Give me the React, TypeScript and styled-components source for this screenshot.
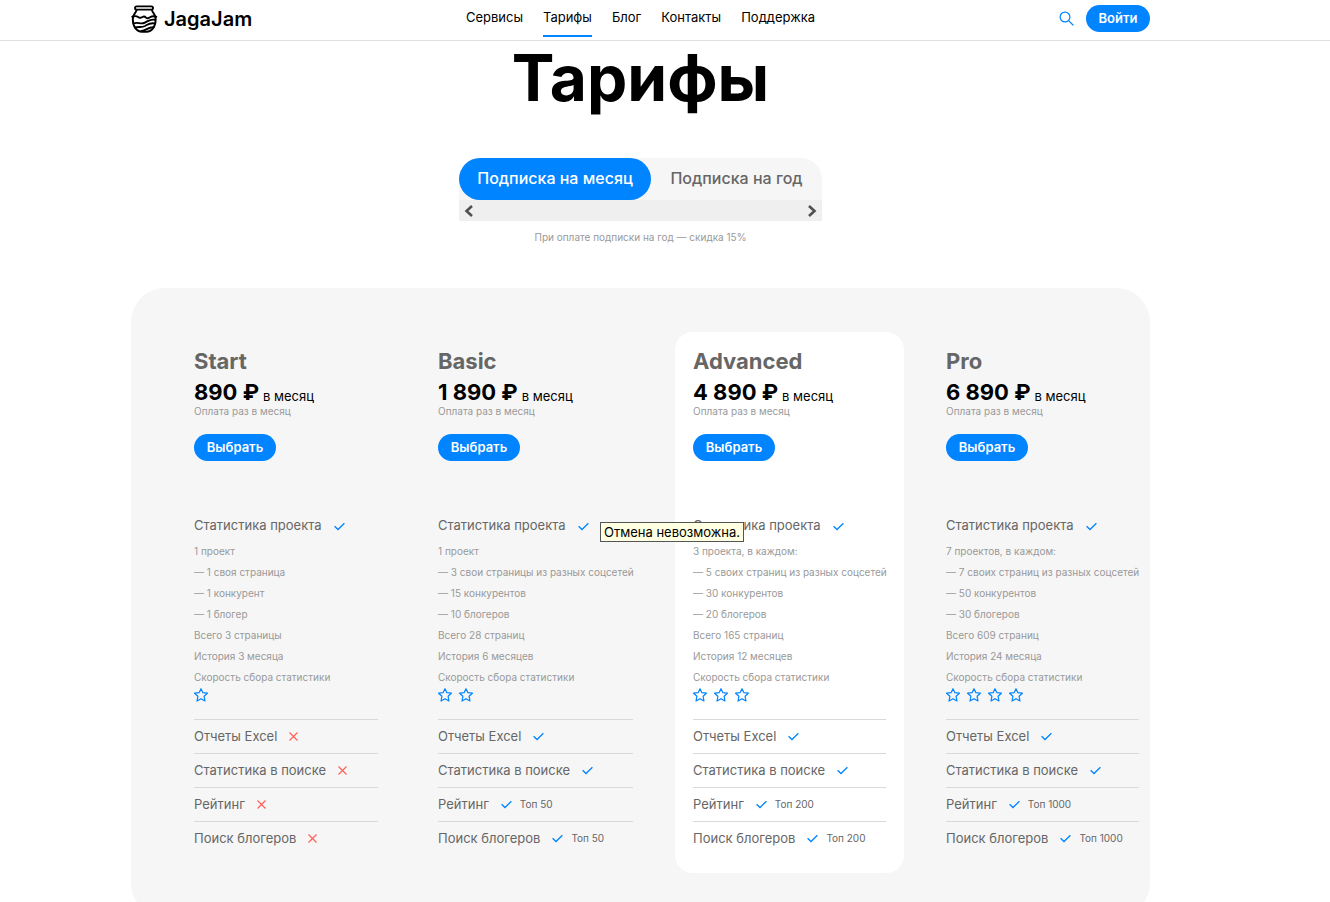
import React from "react";
import styled, { createGlobalStyle } from "styled-components";

const BLUE = "#0084ff";

const GlobalStyle = createGlobalStyle`
  * { box-sizing: border-box; }
  body {
    margin: 0;
    background: #fff;
    color: #000;
    font-family: Inter, "Open Sans", sans-serif;
    font-size: 13px;
    overflow-x: hidden;
  }
  button { font-family: inherit; border: 0; padding: 0; cursor: pointer; }
  h1, h2, h3, p, ul { margin: 0; padding: 0; }
  ul { list-style: none; }
`;

const Container = styled.div`
  max-width: 1068px;
  margin: 0 auto;
  padding-right: 49px;
`;

const Header = styled.header`
  border-bottom: 1px solid #e0e0e0;
`;

const HeaderRow = styled(Container)`
  display: grid;
  grid-template-columns: 1fr auto 1fr;
  height: 40px;
  padding-top: 5px;
`;

const Brand = styled.a`
  display: flex;
  align-items: center;
  gap: 6px;
  height: 27px;
  color: #000;
  font-size: 20px;
  font-weight: 600;
  text-decoration: none;
`;

const Nav = styled.nav`
  display: flex;
  gap: 20px;
`;

const NavLink = styled.a<{ $active?: boolean }>`
  height: 32px;
  border-bottom: 2px solid ${(p) => (p.$active ? BLUE : "transparent")};
  color: #000;
  font-size: 13px;
  line-height: 24px;
  text-decoration: none;
`;

const Actions = styled.div`
  display: flex;
  justify-content: flex-end;
  align-items: center;
  gap: 12px;
  height: 27px;
`;

const IconButton = styled.button`
  display: flex;
  background: none;
  color: ${BLUE};
`;

const PillButton = styled.button<{ $width: number }>`
  display: block;
  width: ${(p) => p.$width}px;
  height: 27px;
  padding-bottom: 1px;
  border-radius: 14px;
  background: ${BLUE};
  color: #fff;
  font-size: 13px;
  font-weight: 600;
`;

const Title = styled.h1`
  margin-top: 7px;
  font-size: 64px;
  font-weight: 700;
  line-height: 60px;
  text-align: center;
`;

const Switcher = styled.div`
  width: 363px;
  margin: 50px auto 0;
  border-radius: 21px 21px 0 0;
  background: #f6f6f6;
`;

const Tabs = styled.div`
  display: flex;
`;

const Tab = styled.button<{ $active?: boolean }>`
  flex: ${(p) => (p.$active ? "0 0 192px" : "1")};
  height: 42px;
  padding-bottom: 2px;
  border-radius: 21px;
  background: ${(p) => (p.$active ? BLUE : "transparent")};
  color: ${(p) => (p.$active ? "#fff" : "#666")};
  font-size: 16px;
  font-weight: 500;
`;

const ScrollTrack = styled.div`
  display: flex;
  justify-content: space-between;
  align-items: center;
  height: 21px;
  padding: 0 5px;
  background: #efefef;
`;

const ArrowButton = styled.button`
  display: flex;
  background: none;
  color: #505050;
`;

const Discount = styled.p`
  margin-top: 8px;
  color: #999;
  font-size: 10px;
  line-height: 16px;
  text-align: center;
`;

const Panel = styled.section`
  margin-top: 43px;
  padding: 44px 0 44px 45px;
  border-radius: 34px;
  background: #f6f6f6;
`;

const Plans = styled.div`
  display: grid;
  grid-template-columns: minmax(0, 220fr) minmax(0, 231fr) minmax(0, 229fr) minmax(0, 229fr);
  gap: 24px;
  margin-right: -7px;
`;

const Plan = styled.article<{ $featured?: boolean }>`
  padding: 18px;
  border-radius: 18px;
  background: ${(p) => (p.$featured ? "#fff" : "transparent")};
  color: #666;
  white-space: nowrap;
`;

const PlanName = styled.h2`
  font-size: 22px;
  font-weight: 700;
  line-height: 22px;
`;

const Price = styled.p`
  display: flex;
  align-items: flex-end;
  gap: 4px;
  margin-top: 8px;
  color: #000;
  font-size: 13px;
  line-height: 16px;
`;

const Amount = styled.strong`
  font-size: 22px;
  font-weight: 700;
  line-height: 24px;
`;

const Billing = styled.p`
  margin-bottom: 16px;
  color: #999;
  font-size: 10px;
  line-height: 14px;
`;

const FeatureLine = styled.div`
  display: flex;
  align-items: center;
  gap: 8px;
`;

const FeatureName = styled.h3`
  padding: 0 4px 2px 0;
  font-size: 13px;
  font-weight: 400;
  line-height: 20px;
`;

const StatsHeading = styled(FeatureLine)`
  position: relative;
  margin-top: 54px;
`;

const Tooltip = styled.span`
  position: absolute;
  left: 162px;
  top: 7px;
  z-index: 1;
  width: 144px;
  border: 1px solid #555;
  background: #ffffe1;
  color: #000;
  font-size: 13px;
  line-height: 18px;
  text-align: center;
`;

const Details = styled.ul`
  margin-top: 4px;
  color: #999;
  font-size: 10px;
  line-height: 21px;
`;

const Stars = styled.div`
  display: flex;
  gap: 7px;
  margin-bottom: 17px;
  color: ${BLUE};
`;

const Feature = styled(FeatureLine)`
  height: 34px;
  border-top: 1px solid #d9d9d9;
`;

const Limit = styled.span`
  padding-bottom: 2px;
  font-size: 10px;
`;

const Logo = () => (
  <svg width="27" height="28" viewBox="0 0 27 28" fill="none" stroke="currentColor" strokeWidth="1.9" strokeLinecap="round" strokeLinejoin="round">
    <rect x="4" y="1.4" width="18" height="3.2" rx="1.6" />
    <path d="M5.500 5C5.200 8 1.800 9 1.800 14C1.800 21.500 5.500 26.700 11 26.700H15.500C21 26.700 24.700 21.500 24.700 14C24.700 9 21.300 8 21 5" />
    <path d="M1.200 11.800C4.500 10.600 5.500 10.800 7 12C8.500 13.200 10 13 11.500 12C13 11 14 11.500 15 12.600C16.500 14 18 13 19.500 12C21 11 23 11 25.300 11.800" />
    <path d="M2.500 18.500C7 16.500 9 19.500 13 18C17 16.500 18.500 13.800 24 14.800" />
    <path d="M4 22.600C8 21 10 23 14 21C18 18.800 19 17.500 23.800 18.500M10.500 26C15 26 17 21.800 22.500 22.200" />
  </svg>
);

const SearchIcon = () => (
  <svg width="15" height="15" viewBox="0 0 15 15" fill="none" stroke="currentColor" strokeWidth="1.2" strokeLinecap="round">
    <circle cx="6" cy="6" r="4.9" />
    <path d="M9.600 9.600L14 14" />
  </svg>
);

const Chevron = ({ right }: { right?: boolean }) => (
  <svg width="9" height="12" viewBox="0 0 9 12" fill="none" stroke="currentColor" strokeWidth="2.6">
    <path d={right ? "M1 1L6.500 6L1 11" : "M8 1L2.500 6L8 11"} />
  </svg>
);

const Check = () => (
  <svg width="11" height="9" viewBox="0 0 11 9" fill="none" stroke={BLUE} strokeWidth="1.3">
    <path d="M.6 4.200L4 7.500L10.400 1.200" />
  </svg>
);

const Cross = () => (
  <svg width="9" height="9" viewBox="0 0 9 9" fill="none" stroke="#ff6159" strokeWidth="1.2">
    <path d="M.5 .5L8.500 8.500M8.500 .5L.5 8.500" />
  </svg>
);

const Star = () => (
  <svg width="14" height="14" viewBox="0 0 14 14" fill="none" stroke="currentColor" strokeWidth="1.2" strokeLinejoin="round">
    <path d="M7 .7L8.900 4.700L13.400 5.200L10.100 8.300L11 13L7 10.700L3 13L3.900 8.300L.6 5.200L5.100 4.700Z" />
  </svg>
);

type PlanData = {
  name: string;
  price: string;
  details: string[];
  speed: number;
  limit?: string;
  featured?: boolean;
  tooltip?: string;
};

const plans: PlanData[] = [
  {
    name: "Start", price: "890 ₽", speed: 1,
    details: ["1 проект", "— 1 своя страница", "— 1 конкурент", "— 1 блогер", "Всего 3 страницы", "История 3 месяца"],
  },
  {
    name: "Basic", price: "1 890 ₽", speed: 2, limit: "Топ 50", tooltip: "Отмена невозможна.",
    details: ["1 проект", "— 3 свои страницы из разных соцсетей", "— 15 конкурентов", "— 10 блогеров", "Всего 28 страниц", "История 6 месяцев"],
  },
  {
    name: "Advanced", price: "4 890 ₽", speed: 3, limit: "Топ 200", featured: true,
    details: ["3 проекта, в каждом:", "— 5 своих страниц из разных соцсетей", "— 30 конкурентов", "— 20 блогеров", "Всего 165 страниц", "История 12 месяцев"],
  },
  {
    name: "Pro", price: "6 890 ₽", speed: 4, limit: "Топ 1000",
    details: ["7 проектов, в каждом:", "— 7 своих страниц из разных соцсетей", "— 50 конкурентов", "— 30 блогеров", "Всего 609 страниц", "История 24 месяца"],
  },
];

const features = [
  { name: "Отчеты Excel", limited: false },
  { name: "Статистика в поиске", limited: false },
  { name: "Рейтинг", limited: true },
  { name: "Поиск блогеров", limited: true },
];

const PlanColumn = ({ plan }: { plan: PlanData }) => (
  <Plan $featured={plan.featured}>
    <PlanName>{plan.name}</PlanName>
    <Price><Amount>{plan.price}</Amount> в месяц</Price>
    <Billing>Оплата раз в месяц</Billing>
    <PillButton $width={82}>Выбрать</PillButton>
    <StatsHeading>
      <FeatureName>Статистика проекта</FeatureName>
      <Check />
      {plan.tooltip && <Tooltip role="tooltip">{plan.tooltip}</Tooltip>}
    </StatsHeading>
    <Details>
      {plan.details.map((line) => <li key={line}>{line}</li>)}
      <li>Скорость сбора статистики</li>
    </Details>
    <Stars>
      {Array.from({ length: plan.speed }, (_, i) => <Star key={i} />)}
    </Stars>
    {features.map((feature) => (
      <Feature key={feature.name}>
        <FeatureName>{feature.name}</FeatureName>
        {plan.limit ? <Check /> : <Cross />}
        {feature.limited && plan.limit && <Limit>{plan.limit}</Limit>}
      </Feature>
    ))}
  </Plan>
);

const navItems = ["Сервисы", "Тарифы", "Блог", "Контакты", "Поддержка"];

export default function App() {
  return (
    <>
      <GlobalStyle />
      <Header>
        <HeaderRow>
          <Brand href="#"><Logo />JagaJam</Brand>
          <Nav>
            {navItems.map((item) => (
              <NavLink key={item} href="#" $active={item === "Тарифы"}>{item}</NavLink>
            ))}
          </Nav>
          <Actions>
            <IconButton aria-label="Поиск"><SearchIcon /></IconButton>
            <PillButton $width={64}>Войти</PillButton>
          </Actions>
        </HeaderRow>
      </Header>
      <Container as="main">
        <Title>Тарифы</Title>
        <Switcher>
          <Tabs role="tablist">
            <Tab role="tab" aria-selected="true" $active>Подписка на месяц</Tab>
            <Tab role="tab" aria-selected="false">Подписка на год</Tab>
          </Tabs>
          <ScrollTrack>
            <ArrowButton aria-label="Назад"><Chevron /></ArrowButton>
            <ArrowButton aria-label="Вперёд"><Chevron right /></ArrowButton>
          </ScrollTrack>
        </Switcher>
        <Discount>При оплате подписки на год — скидка 15%</Discount>
        <Panel>
          <Plans>
            {plans.map((plan) => <PlanColumn key={plan.name} plan={plan} />)}
          </Plans>
        </Panel>
      </Container>
    </>
  );
}
